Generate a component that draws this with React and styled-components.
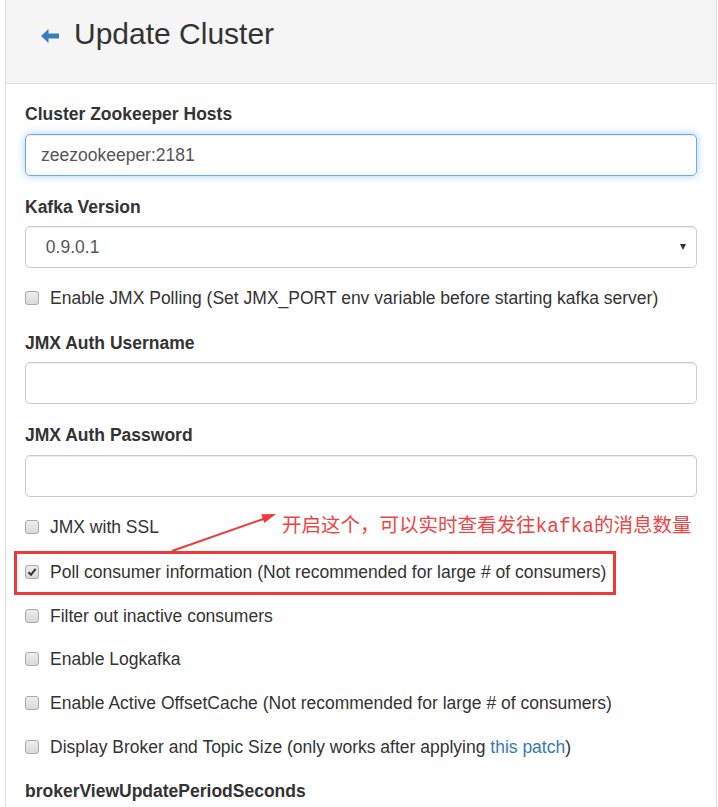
import React from "react";
import styled, { createGlobalStyle } from "styled-components";

const GlobalStyle = createGlobalStyle`
  html, body {
    margin: 0;
    padding: 0;
    background: #fff;
  }
  body {
    font-family: "Liberation Sans", Arial, sans-serif;
    color: #333;
    overflow: hidden;
  }
`;

const Panel = styled.div`
  margin-left: 5px;
  width: 710px;
  border-left: 1px solid #ddd;
  border-right: 1px solid #ddd;
  min-height: 807px;
  position: relative;
`;

const Heading = styled.div`
  height: 84px;
  box-sizing: border-box;
  background: #f5f5f5;
  border-bottom: 1px solid #ddd;
  display: flex;
  align-items: center;
  padding: 0 0 15px 35px;
  gap: 15px;

  svg {
    margin-top: 3px;
  }
`;

const Title = styled.h1`
  margin: 0;
  font-size: 30px;
  font-weight: 400;
  color: #333;
`;

const Body = styled.div`
  padding: 18px 19px 0 19px;
  display: flex;
  flex-direction: column;
`;

const Label = styled.label`
  display: block;
  font-size: 17.5px;
  font-weight: 700;
  line-height: 24px;
  margin-bottom: ${(p) => p.$mb ?? 8}px;
`;

const Field = styled.div`
  margin-bottom: ${(p) => p.$gap ?? 18}px;
`;

const Input = styled.div`
  height: 42px;
  box-sizing: border-box;
  border: 1px solid ${(p) => (p.$focus ? "#66afe9" : "#ccc")};
  border-radius: 5px;
  box-shadow: ${(p) =>
    p.$focus
      ? "inset 0 1px 1px rgba(0,0,0,.075), 0 0 8px rgba(102,175,233,.6)"
      : "inset 0 1px 1px rgba(0,0,0,.075)"};
  display: flex;
  align-items: center;
  padding: 0 15px;
  font-size: 17.5px;
  color: #555;
  position: relative;
`;

const Caret = styled.span`
  position: absolute;
  right: 10px;
  top: 17px;
  width: 0;
  height: 0;
  border-left: 3px solid transparent;
  border-right: 3px solid transparent;
  border-top: 6px solid #333;
`;

const CheckRow = styled.div`
  display: flex;
  align-items: center;
  height: 24px;
  margin-bottom: ${(p) => p.$gap ?? 20}px;
  font-size: 17.5px;
  line-height: 24px;
  position: relative;
`;

const Box = styled.span`
  width: 12px;
  height: 12px;
  margin-right: 11px;
  border: 1px solid #a9a9a9;
  border-radius: 3px;
  background: linear-gradient(#ededed, #d9d9d9);
  display: flex;
  align-items: center;
  justify-content: center;
  flex-shrink: 0;
`;

const Link = styled.span`
  color: #337ab7;
`;

const RedBox = styled.div`
  position: absolute;
  left: -11px;
  top: -9px;
  width: 596px;
  height: 38px;
  border: 3px solid #f03a3a;
  pointer-events: none;
`;

const Note = styled.div`
  position: absolute;
  left: 257px;
  top: -48px;
  font-family: "Noto Sans CJK SC", sans-serif;
  font-size: 19.5px;
  color: #f04444;
  white-space: nowrap;
  line-height: 24px;

  span {
    font-family: "Liberation Mono", monospace;
    font-size: 19.5px;
  }
`;

const ArrowSvg = styled.svg`
  position: absolute;
  left: 140px;
  top: -62px;
  overflow: visible;
`;

const BackArrow = () => (
  <svg width="18" height="14" viewBox="0 0 18 14">
    <path d="M0 7 L7.5 0 L7.5 4.5 L18 4.5 L18 9.5 L7.5 9.5 L7.5 14 Z" fill="#3a7dbf" />
  </svg>
);

const Check = ({ checked }) => (
  <Box>
    {checked && (
      <svg width="10" height="10" viewBox="0 0 10 10">
        <path d="M1.5 5.2 L4 7.8 L8.6 1.8" stroke="#333" strokeWidth="2" fill="none" />
      </svg>
    )}
  </Box>
);

export default function App() {
  return (
    <>
      <GlobalStyle />
      <Panel>
        <Heading>
          <BackArrow />
          <Title>Update Cluster</Title>
        </Heading>
        <Body>
          <Field $gap={19}>
            <Label>Cluster Zookeeper Hosts</Label>
            <Input $focus>zeezookeeper:2181</Input>
          </Field>
          <Field $gap={18}>
            <Label $mb={7}>Kafka Version</Label>
            <Input>
              &nbsp;0.9.0.1
              <Caret />
            </Input>
          </Field>
          <CheckRow $gap={21}>
            <Check />
            Enable JMX Polling (Set JMX_PORT env variable before starting kafka server)
          </CheckRow>
          <Field $gap={19}>
            <Label $mb={7}>JMX Auth Username</Label>
            <Input />
          </Field>
          <Field>
            <Label>JMX Auth Password</Label>
            <Input />
          </Field>
          <CheckRow $gap={21}>
            <Check />
            JMX with SSL
          </CheckRow>
          <CheckRow $gap={20}>
            <Check checked />
            Poll consumer information (Not recommended for large # of consumers)
            <RedBox />
            <ArrowSvg width="120" height="56" viewBox="0 0 120 56">
              <line x1="7" y1="53" x2="99" y2="20.7" stroke="#f03a3a" strokeWidth="2" />
              <path d="M111 16 L99.3 25 L96.3 16.3 Z" fill="#f03a3a" />
            </ArrowSvg>
            <Note>
              开启这个，可以实时查看发往<span>kafka</span>的消息数量
            </Note>
          </CheckRow>
          <CheckRow $gap={19}>
            <Check />
            Filter out inactive consumers
          </CheckRow>
          <CheckRow>
            <Check />
            Enable Logkafka
          </CheckRow>
          <CheckRow>
            <Check />
            Enable Active OffsetCache (Not recommended for large # of consumers)
          </CheckRow>
          <CheckRow>
            <Check />
            Display Broker and Topic Size (only works after applying&nbsp;<Link>this patch</Link>)
          </CheckRow>
          <Field>
            <Label>brokerViewUpdatePeriodSeconds</Label>
          </Field>
        </Body>
      </Panel>
    </>
  );
}
